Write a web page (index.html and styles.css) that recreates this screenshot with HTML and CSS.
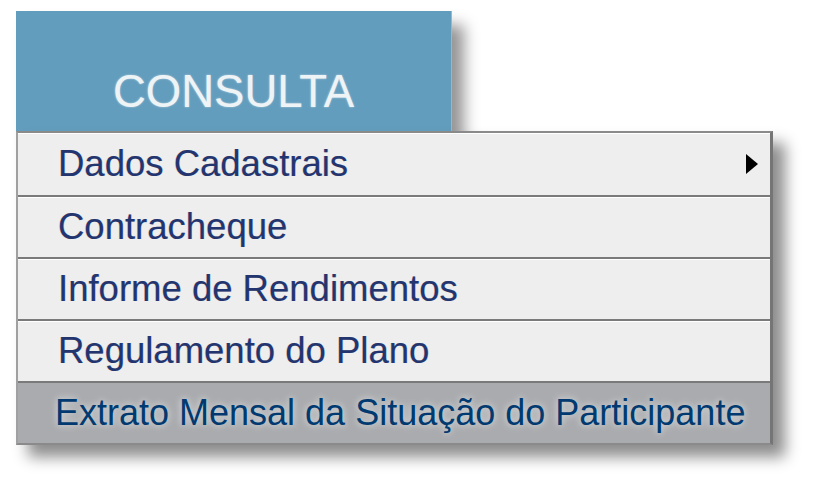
FILE: index.html
```html
<!DOCTYPE html>
<html lang="pt">
<head>
<meta charset="utf-8">
<title>Consulta</title>
<link rel="stylesheet" href="styles.css">
</head>
<body>
<div class="page">
  <div class="tab">CONSULTA</div>
  <ul class="menu">
    <li class="item first"><span>Dados Cadastrais</span>
      <svg class="arrow" width="12" height="20" viewBox="0 0 12 20"><polygon points="0,0 12,10 0,20" fill="#000"/></svg>
    </li>
    <li class="item"><span>Contracheque</span></li>
    <li class="item"><span>Informe de Rendimentos</span></li>
    <li class="item"><span>Regulamento do Plano</span></li>
    <li class="item active"><span>Extrato Mensal da Situação do Participante</span></li>
  </ul>
</div>
</body>
</html>
```
FILE: styles.css
```css
html, body {
  margin: 0;
  padding: 0;
  background: #ffffff;
}
.page {
  padding: 11px 0 52px 16px;
  font-family: "Liberation Sans", Arial, sans-serif;
}
.tab {
  width: 435px;
  height: 103px;
  padding-bottom: 17px;
  background: #639dbd;
  border-right: 1px solid #8fbad2;
  color: #eef3f6;
  font-size: 45.5px;
  line-height: 44px;
  display: flex;
  justify-content: center;
  align-items: flex-end;
  text-shadow: 0 0 2px rgba(255,255,255,0.6);
  box-shadow: 12px 14px 14px rgba(0,0,0,0.42);
}
.menu {
  position: relative;
  list-style: none;
  margin: 0;
  padding: 0;
  width: 752px;
  background: #eeeeee;
  border-top: 2px solid #8a8a8a;
  border-left: 2px solid #a0a0a0;
  border-right: 3px solid #757575;
  border-bottom: 2px solid #8a8a8a;
  box-shadow: 12px 12px 14px rgba(0,0,0,0.45);
}
.item {
  height: 60px;
  display: flex;
  align-items: center;
  justify-content: space-between;
  padding: 0 12px 0 40px;
  border-top: 2px solid #7a7a7a;
  box-shadow: inset 0 1px 0 #ffffff;
  color: #22356f;
  font-size: 36.5px;
  text-shadow: -0.5px 0 0 rgba(200,120,60,0.35), 0.5px 0 0 rgba(60,120,220,0.35);
}
.item.first {
  height: 62px;
  border-top: none;
  box-shadow: inset 0 1px 0 #ffffff;
}
.item.active {
  background: #a9abae;
  color: #003a70;
  font-size: 36px;
  padding-left: 37px;
  box-shadow: none;
  text-shadow: 0 0 6px #d2d4d6, 0 0 10px #c8cacc;
}
.arrow {
  display: block;
}
```
